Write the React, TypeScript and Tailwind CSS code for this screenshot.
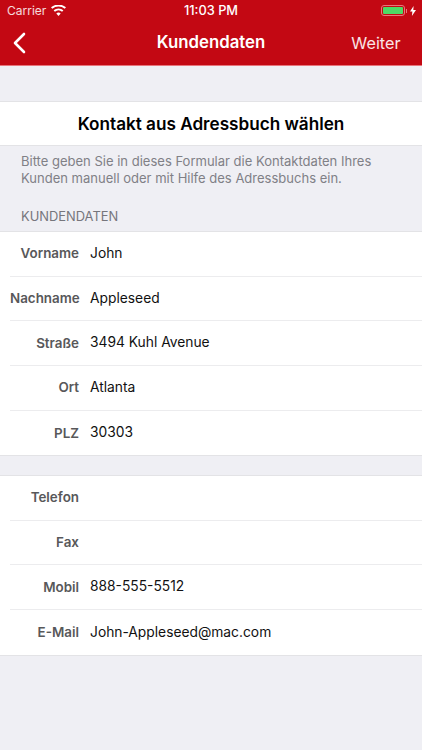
const addressRows = [
  { label: "Vorname", value: "John" },
  { label: "Nachname", value: "Appleseed" },
  { label: "Straße", value: "3494 Kuhl Avenue" },
  { label: "Ort", value: "Atlanta" },
  { label: "PLZ", value: "30303" },
];

const contactRows = [
  { label: "Telefon", value: "" },
  { label: "Fax", value: "" },
  { label: "Mobil", value: "888-555-5512" },
  { label: "E-Mail", value: "John-Appleseed@mac.com" },
];

function FormGroup({ rows }: { rows: { label: string; value: string }[] }) {
  return (
    <div className="bg-white border-y border-[#e3e3e6]">
      {rows.map((row, index) => (
        <div key={row.label} className="pl-[10px]">
          <div className={`flex h-[44.7px] items-center pb-px ${index < rows.length - 1 ? "border-b border-[#ececee]" : ""}`}>
            <span className="w-[69px] text-right text-[13.4px] font-semibold text-[#58585a] whitespace-nowrap">{row.label}</span>
            <span className="ml-[11px] text-[13.8px] text-[#111]">{row.value}</span>
          </div>
        </div>
      ))}
    </div>
  );
}

export default function App() {
  return (
    <div className="w-[422px] h-[750px] overflow-hidden bg-[#efeff4] font-['Inter','Liberation_Sans',sans-serif]">
      <div className="h-[65px] bg-[#c30813] border-b border-[#e8747b] text-white box-content -mb-px">
        <div className="relative flex h-[21px] items-center justify-between pl-[7px] pr-[6px] text-[12px]">
          <div className="flex items-center gap-[5px] text-white/85">
            <span>Carrier</span>
            <svg width="15" height="11" viewBox="0 0 15 11" fill="white">
              <path d="M7.5 11 5.3 8.4a3.4 3.4 0 0 1 4.4 0L7.5 11Z" />
              <path d="M3.9 6.8 2.6 5.3a7.6 7.6 0 0 1 9.8 0l-1.3 1.5a5.6 5.6 0 0 0-7.2 0Z" />
              <path d="M1.3 3.8 0 2.3a11.6 11.6 0 0 1 15 0l-1.3 1.5a9.6 9.6 0 0 0-12.4 0Z" />
            </svg>
          </div>
          <span className="absolute left-0 right-0 text-center font-medium text-[12.8px]">11:03 PM</span>
          <div className="flex items-center">
            <div className="flex h-[11px] w-[24px] items-center rounded-[3px] border border-[#e8747b] p-px">
              <div className="h-full w-full rounded-[1px] bg-[#4cd964]" />
            </div>
            <div className="ml-px h-[4px] w-[1.5px] bg-[#e8747b]" />
            <svg className="ml-[3px]" width="6" height="10" viewBox="0 0 6 10" fill="white">
              <path d="M3.6 0 0 5.6h2.4L1.9 10 6 3.9H3.3L3.6 0Z" />
            </svg>
          </div>
        </div>
        <div className="relative flex h-[44px] items-center justify-between pl-[12px] pr-[21.5px]">
          <svg width="14" height="22" viewBox="0 0 14 22" fill="none" stroke="white" strokeWidth="2.6" strokeLinecap="round" strokeLinejoin="round">
            <path d="M12 2 3 11l9 9" />
          </svg>
          <span className="absolute left-0 right-0 text-center text-[16.8px] font-semibold">Kundendaten</span>
          <span className="text-[16.2px] text-white/90">Weiter</span>
        </div>
      </div>

      <div className="mt-[36px] flex h-[45px] items-center justify-center bg-white border-y border-[#e3e3e6] text-[17.15px] font-semibold text-black">
        Kontakt aus Adressbuch wählen
      </div>
      <p className="px-[21px] pt-[7px] text-[13.03px] leading-[16.5px] text-[#808086]">
        Bitte geben Sie in dieses Formular die Kontaktdaten Ihres Kunden manuell oder mit Hilfe des Adressbuchs ein.
      </p>
      <div className="px-[21px] pt-[23px] pb-[6px] text-[12.9px] leading-[16px] text-[#76767c]">KUNDENDATEN</div>
      <FormGroup rows={addressRows} />
      <div className="h-[18.5px]" />
      <FormGroup rows={contactRows} />
    </div>
  );
}
